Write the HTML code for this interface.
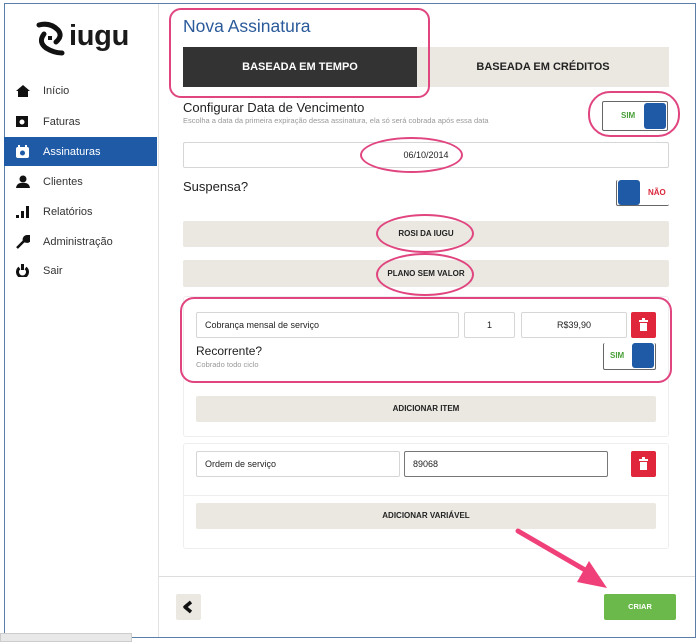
<!DOCTYPE html>
<html><head><meta charset="utf-8"><style>
*{box-sizing:border-box;margin:0;padding:0}
body{width:700px;height:642px;background:#fff;position:relative;overflow:hidden;font-family:"Liberation Sans",sans-serif;color:#222}
.a{position:absolute}
.bar{position:absolute;background:#ebe8e2;border-radius:2px;font-size:8px;font-weight:bold;text-align:center;color:#222}
.inp{position:absolute;border:1px solid #d6d6d6;border-radius:2px;background:#fff;font-size:9px;padding-left:8px;display:flex;align-items:center}
.nav{position:absolute;left:4px;width:153px;height:29px;font-size:11px;color:#333;display:flex;align-items:center}
.nav span{position:absolute;left:39px}
.nav svg{position:absolute;left:12px}
.trash{position:absolute;width:25px;height:26px;background:#e0263a;border-radius:2px}
.pink{position:absolute;border:2px solid #e0457f;}
</style></head><body>
<div class="a" style="left:4px;top:3px;width:692px;height:635px;border:1px solid #5a7ea6"></div>
<div class="a" style="left:158px;top:4px;width:1px;height:633px;background:#e3e3e3"></div>
<div class="a" style="left:0;top:633px;width:132px;height:9px;background:#e8e8e8;border:1px solid #ccc"></div>

<svg class="a" style="left:36px;top:20px" width="32" height="38" viewBox="0 0 32 38"><path d="M3 5 Q14 2 22 10 M22 10 Q27 16 20 22" stroke="#111" stroke-width="5" fill="none" stroke-linecap="round"/><path d="M8 14 Q2 22 10 28 Q18 33 26 33" stroke="#111" stroke-width="5" fill="none" stroke-linecap="round"/><rect x="12" y="16" width="4" height="4" fill="#111"/></svg>
<div class="a" style="left:69px;top:20px;font-size:29px;font-weight:bold;color:#1a1a1a;letter-spacing:-0.3px">iugu</div>

<div class="nav" style="top:76px"><svg width="14" height="12" viewBox="0 0 14 12"><path d="M7 0 L14 6 H12 V12 H2 V6 H0Z" fill="#111"/></svg><span>Início</span></div>
<div class="nav" style="top:107px"><svg width="12" height="11"><rect width="12" height="11" fill="#111"/><circle cx="6" cy="6" r="2.5" fill="#fff"/></svg><span>Faturas</span></div>
<div class="nav" style="top:137px;background:#1f5aa6;color:#fff"><svg width="13" height="13"><rect y="2" width="13" height="11" rx="2" fill="#fff"/><rect x="2" width="2" height="4" fill="#fff"/><rect x="9" width="2" height="4" fill="#fff"/><circle cx="6.5" cy="8" r="2.5" fill="#1f5aa6"/></svg><span>Assinaturas</span></div>
<div class="nav" style="top:167px"><svg width="14" height="13"><circle cx="7" cy="4" r="3.5" fill="#111"/><path d="M0 13 Q1 7 7 8 Q13 7 14 13Z" fill="#111"/></svg><span>Clientes</span></div>
<div class="nav" style="top:197px"><svg width="13" height="12"><rect y="9" width="3" height="3" fill="#111"/><rect x="5" y="5" width="3" height="7" fill="#111"/><rect x="10" width="3" height="12" fill="#111"/></svg><span>Relatórios</span></div>
<div class="nav" style="top:227px"><svg width="14" height="14"><path d="M1 13 L8 6 M8 6 Q7 1 13 1 L10 4 L12 6 L14 3 Q14 8 8 6" stroke="#111" stroke-width="2.5" fill="#111"/></svg><span>Administração</span></div>
<div class="nav" style="top:256px"><svg width="13" height="13"><path d="M3.5 4 A5 5 0 1 0 9.5 4" stroke="#111" stroke-width="3" fill="none"/><rect x="5" y="0" width="3" height="6" fill="#111"/></svg><span>Sair</span></div>

<div class="a" style="left:183px;top:16px;font-size:17.5px;color:#2a5a9a">Nova Assinatura</div>
<div class="a" style="left:183px;top:47px;width:234px;height:40px;background:#333;color:#fff;font-size:11px;font-weight:bold;text-align:center;line-height:40px">BASEADA EM TEMPO</div>
<div class="a" style="left:417px;top:47px;width:252px;height:40px;background:#ebe8e2;color:#222;font-size:11px;font-weight:bold;text-align:center;line-height:40px">BASEADA EM CRÉDITOS</div>
<div class="pink" style="left:169px;top:8px;width:261px;height:90px;border-radius:12px"></div>

<div class="a" style="left:183px;top:100px;font-size:13px">Configurar Data de Vencimento</div>
<div class="a" style="left:183px;top:116px;font-size:7.5px;color:#999">Escolha a data da primeira expiração dessa assinatura, ela só será cobrada após essa data</div>
<div class="a" style="left:602px;top:101px;width:66px;height:30px;border:1px solid #666;border-radius:2px;background:#fff"><span style="position:absolute;left:18px;top:9px;font-size:8px;font-weight:bold;color:#4aa03a">SIM</span><div style="position:absolute;right:1px;top:1px;width:22px;height:26px;background:#1f5aa6;border-radius:3px"></div></div>
<div class="pink" style="left:588px;top:91px;width:92px;height:46px;border-radius:22px"></div>

<div class="inp" style="left:183px;top:142px;width:486px;height:26px;justify-content:center;padding:0">06/10/2014</div>
<div class="pink" style="left:360px;top:137px;width:103px;height:36px;border-radius:50%"></div>

<div class="a" style="left:183px;top:179px;font-size:13px">Suspensa?</div>
<div class="a" style="left:616px;top:180px;width:53px;height:26px;border:1px solid #666;border-radius:2px;border-top:none;border-right:none"><div style="position:absolute;left:1px;top:0;width:22px;height:25px;background:#1f5aa6;border-radius:3px"></div><span style="position:absolute;left:31px;top:8px;font-size:8px;font-weight:bold;color:#d9263a">NÃO</span></div>

<div class="bar" style="left:183px;top:221px;width:486px;height:26px;line-height:26px">ROSI DA IUGU</div>
<div class="pink" style="left:376px;top:214px;width:98px;height:39px;border-radius:50%"></div>
<div class="bar" style="left:183px;top:260px;width:486px;height:27px;line-height:27px">PLANO SEM VALOR</div>
<div class="pink" style="left:376px;top:253px;width:98px;height:43px;border-radius:50%"></div>

<div class="a" style="left:183px;top:296px;width:486px;height:141px;border:1px solid #eee;border-radius:3px"></div>
<div class="inp" style="left:196px;top:312px;width:263px;height:26px">Cobrança mensal de serviço</div>
<div class="inp" style="left:464px;top:312px;width:51px;height:26px;justify-content:center;padding:0">1</div>
<div class="inp" style="left:521px;top:312px;width:106px;height:26px;justify-content:center;padding:0">R$39,90</div>
<div class="trash" style="left:631px;top:312px"><svg width="25" height="26"><rect x="8" y="8" width="9" height="2" fill="#fff"/><rect x="11" y="6" width="3" height="2" fill="#fff"/><rect x="9" y="11" width="7" height="8" fill="#fff"/></svg></div>
<div class="a" style="left:196px;top:344px;font-size:12px">Recorrente?</div>
<div class="a" style="left:196px;top:360px;font-size:7.5px;color:#999">Cobrado todo ciclo</div>
<div class="a" style="left:603px;top:343px;width:53px;height:27px;border:1px solid #666;border-radius:2px;border-top:none;background:#fff"><span style="position:absolute;left:6px;top:8px;font-size:8px;font-weight:bold;color:#4aa03a">SIM</span><div style="position:absolute;right:1px;top:0;width:22px;height:25px;background:#1f5aa6;border-radius:3px"></div></div>
<div class="pink" style="left:180px;top:297px;width:492px;height:86px;border-radius:14px"></div>
<div class="bar" style="left:196px;top:396px;width:460px;height:26px;line-height:26px">ADICIONAR ITEM</div>

<div class="a" style="left:183px;top:443px;width:486px;height:106px;border:1px solid #eee;border-radius:3px"></div>
<div class="inp" style="left:196px;top:451px;width:204px;height:26px">Ordem de serviço</div>
<div class="inp" style="left:404px;top:451px;width:204px;height:26px;border-color:#777">89068</div>
<div class="trash" style="left:631px;top:451px"><svg width="25" height="26"><rect x="8" y="8" width="9" height="2" fill="#fff"/><rect x="11" y="6" width="3" height="2" fill="#fff"/><rect x="9" y="11" width="7" height="8" fill="#fff"/></svg></div>
<div class="a" style="left:183px;top:495px;width:486px;height:1px;background:#eee"></div>
<div class="bar" style="left:196px;top:503px;width:460px;height:26px;line-height:26px">ADICIONAR VARIÁVEL</div>

<div class="a" style="left:159px;top:576px;width:536px;height:1px;background:#ddd"></div>
<div class="a" style="left:176px;top:594px;width:25px;height:26px;background:#ebe8e2;border-radius:2px"><svg width="25" height="26"><path d="M15 8 L9 13 L15 18" stroke="#111" stroke-width="3.5" fill="none" stroke-linejoin="round"/></svg></div>
<div class="a" style="left:604px;top:594px;width:72px;height:26px;background:#6ab94a;border-radius:2px;color:#fff;font-size:7.5px;font-weight:bold;text-align:center;line-height:26px">CRIAR</div>

<svg class="a" style="left:0;top:0" width="700" height="642"><path d="M518 531 L592 574" stroke="#f0407a" stroke-width="5" stroke-linecap="round"/><path d="M607 588 L589 561 L577 582Z" fill="#f0407a"/></svg>
</body></html>
